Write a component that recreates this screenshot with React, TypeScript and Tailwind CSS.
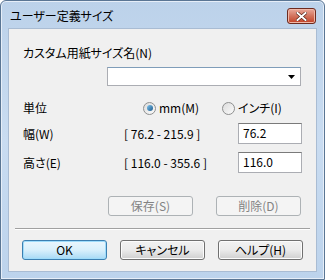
import React from 'react'

const font = "font-['Noto_Sans_CJK_JP',sans-serif] [font-feature-settings:'palt']"

const Btn: React.FC<{ label: string; disabled?: boolean; primary?: boolean; className?: string }> = ({ label, disabled, primary, className = '' }) => (
  <div
    className={`h-[20px] w-[85px] rounded-[3px] border flex items-center justify-center text-[12px] leading-none ${className} ${
      disabled
        ? 'border-[#adb2b5] bg-[#f4f4f4] text-[#838383]'
        : primary
          ? 'border-[#3c7fb1] bg-gradient-to-b from-[#eaf6fd] via-[#d9f0fc] to-[#a7d9f5] text-black shadow-[inset_0_0_0_1px_#9fdcfb]'
          : 'border-[#707070] bg-gradient-to-b from-[#f2f2f2] via-[#ebebeb] to-[#cfcfcf] text-black shadow-[inset_0_0_0_1px_#fcfcfc]'
    }`}
  >
    {label}
  </div>
)

const Radio: React.FC<{ checked?: boolean; label: string }> = ({ checked, label }) => (
  <div className="flex items-center gap-[3px]">
    <div className="w-[13px] h-[13px] rounded-full border border-[#8e8f8f] bg-gradient-to-br from-[#dcdcdc] to-[#fbfbfb] flex items-center justify-center">
      {checked && <div className="w-[6px] h-[6px] rounded-full bg-gradient-to-br from-[#7ec4ee] to-[#1a5a8c]" />}
    </div>
    <span>{label}</span>
  </div>
)

const Field: React.FC<{ value: string }> = ({ value }) => (
  <div className="w-[64px] h-[21px] border border-[#abadb3] border-t-[#7a7a7a] bg-white pl-[4px] text-[12px] leading-[18px]">
    {value}
  </div>
)

export default function App() {
  return (
    <div className={`w-[325px] h-[280px] ${font} text-[12px] text-black`}>
      <div className="w-full h-full rounded-t-[6px] border border-[#5a7694] bg-gradient-to-b from-[#bcd2ea] via-[#c9dcf1] to-[#bcd3ec] flex flex-col px-[7px] pb-[7px] shadow-[inset_0_0_0_1px_#e6eef8]">
        {/* Title bar */}
        <div className="h-[27px] flex items-center justify-between">
          <span className="ml-[2px] mt-[2px] text-[12px]">ユーザー定義サイズ</span>
          <div className="mt-[3px] mr-[1px] w-[29px] h-[16px] rounded-[3px] border border-[#6d2b1f] bg-gradient-to-b from-[#e9a99b] via-[#d2735d] to-[#c13e23] flex items-center justify-center shadow-[inset_0_0_0_1px_#f0b8a8]">
            <svg width="11" height="9" viewBox="0 0 11 9">
              <path d="M1.5 1 L9.5 8 M9.5 1 L1.5 8" stroke="#4a1a10" strokeWidth="3.2" strokeLinecap="square" />
              <path d="M1.5 1 L9.5 8 M9.5 1 L1.5 8" stroke="#ffffff" strokeWidth="2" strokeLinecap="square" />
            </svg>
          </div>
        </div>
        {/* Client area */}
        <div className="flex-1 bg-[#f0f0f0] border border-[#a9bcd3] flex flex-col">
          <div className="ml-[14px] mt-[16px] h-[16px] leading-[16px]">カスタム用紙サイズ名(N)</div>
          <div className="ml-[98px] mt-[6px] w-[194px] h-[19px] border border-[#abadb3] border-t-[#7f9db9] bg-white flex items-center justify-end pr-[5px]">
            <svg width="7" height="4" viewBox="0 0 7 4">
              <path d="M0 0 H7 L3.5 4 Z" fill="#000" />
            </svg>
          </div>
          <div className="mt-[14px] h-[16px] flex items-center">
            <span className="ml-[14px] w-[120px]">単位</span>
            <div className="w-[79px]"><Radio checked label="mm(M)" /></div>
            <Radio label="インチ(I)" />
          </div>
          <div className="mt-[7px] h-[21px] flex items-center">
            <span className="ml-[14px] w-[101px]">幅(W)</span>
            <span className="w-[114px]">[ 76.2 - 215.9 ]</span>
            <Field value="76.2" />
          </div>
          <div className="mt-[8px] h-[21px] flex items-center">
            <span className="ml-[14px] w-[101px]">高さ(E)</span>
            <span className="w-[114px]">[ 116.0 - 355.6 ]</span>
            <Field value="116.0" />
          </div>
          <div className="mt-[23px] flex gap-[23px] ml-[99px]">
            <Btn label="保存(S)" disabled />
            <Btn label="削除(D)" disabled />
          </div>
          <div className="mt-[12px] ml-[6px] w-[295px] h-[2px] border-t border-[#a0a0a0] border-b border-b-white" />
          <div className="mt-[10px] ml-[13px] flex gap-[13px]">
            <Btn label="OK" primary className="w-[84px]" />
            <Btn label="キャンセル" />
            <Btn label="ヘルプ(H)" />
          </div>
        </div>
      </div>
    </div>
  )
}
